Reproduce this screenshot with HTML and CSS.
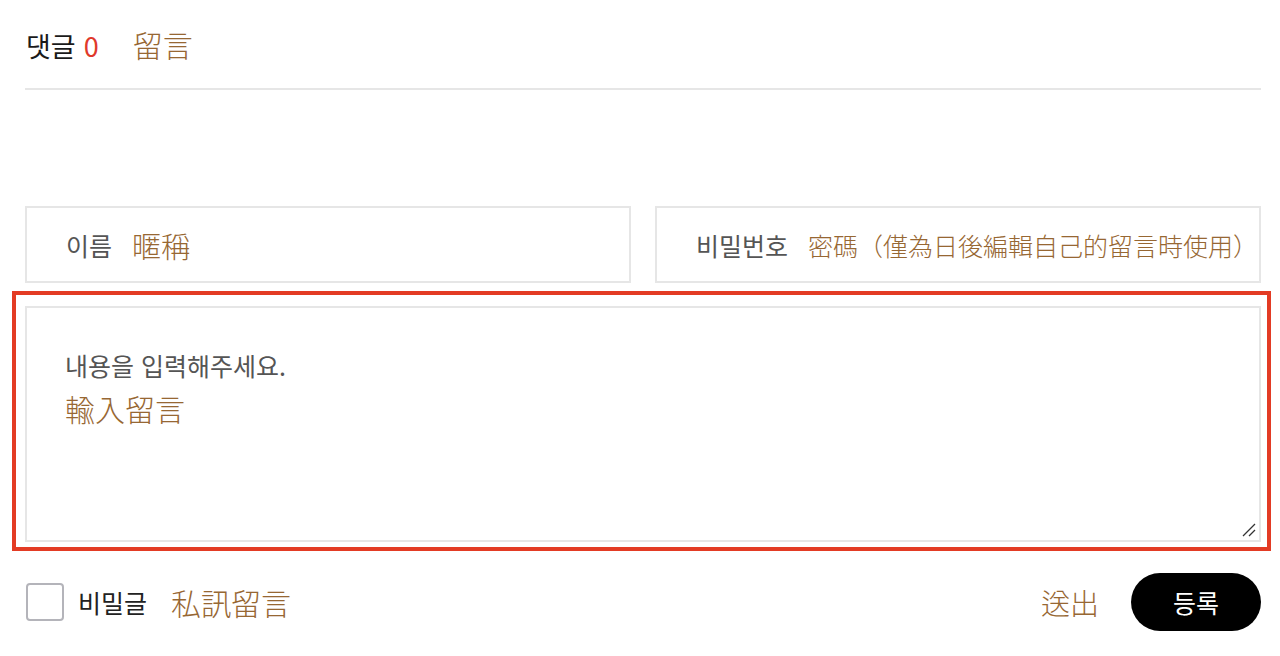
FILE: index.html
```html
<!DOCTYPE html>
<html lang="ko">
<head>
<meta charset="utf-8">
<title>댓글</title>
<link rel="stylesheet" href="styles.css">
</head>
<body>
<div class="page">
  <div class="head">
    <span class="head-title">댓글</span>
    <span class="head-count">0</span>
    <span class="note note-head">留言</span>
  </div>

  <div class="fields">
    <div class="field">
      <span class="label">이름</span>
      <span class="note">暱稱</span>
    </div>
    <div class="field">
      <span class="label">비밀번호</span>
      <span class="note note-sm">密碼（僅為日後編輯自己的留言時使用）</span>
    </div>
  </div>

  <div class="content-wrap">
    <div class="content">
      <div class="placeholder">내용을 입력해주세요.</div>
      <div class="note">輸入留言</div>
      <svg class="grip" width="14" height="14" viewBox="0 0 14 14">
        <line x1="1" y1="13" x2="13" y2="1" stroke="#333" stroke-width="1.3"/>
        <line x1="7" y1="13" x2="13" y2="7" stroke="#333" stroke-width="1.3"/>
      </svg>
    </div>
    <div class="highlight"></div>
  </div>

  <div class="foot">
    <label class="secret">
      <span class="check"></span>
      <span class="secret-label">비밀글</span>
      <span class="note">私訊留言</span>
    </label>
    <div class="submit">
      <span class="note">送出</span>
      <button class="btn">등록</button>
    </div>
  </div>
</div>
</body>
</html>
```

FILE: styles.css
```css
* { box-sizing: border-box; }
html, body { margin: 0; padding: 0; background: #fff; }
body {
  font-family: "Noto Sans CJK KR", "Noto Sans", sans-serif;
  color: #222;
}
.page {
  width: 1280px;
  padding: 0 19px 0 25px;
}
.note {
  font-family: "Noto Sans CJK TC", "Noto Sans CJK KR", sans-serif;
  color: #976733;
  font-size: 30px;
  font-weight: 300;
}
.note-sm { font-size: 25px; }

.head {
  height: 90px;
  border-bottom: 2px solid #e6e6e6;
  display: flex;
  align-items: baseline;
  padding-top: 22px;
  padding-left: 1px;
}
.head-title { font-size: 27px; color: #1a1a1a; }
.head-count { font-size: 27px; color: #e0392b; margin-left: 8px; }
.note-head { margin-left: 34px; }

.fields {
  margin-top: 116px;
  display: grid;
  grid-template-columns: 1fr 1fr;
  gap: 24px;
}
.field {
  height: 77px;
  border: 2px solid #e6e6e6;
  display: flex;
  align-items: center;
  padding-left: 39px;
}
.label { font-size: 25px; color: #555; margin-right: 20px; }
.field .note { font-size: 29px; }
.field .note-sm { font-size: 25px; }

.content-wrap {
  position: relative;
  margin-top: 23px;
}
.content {
  position: relative;
  height: 236px;
  border: 2px solid #e6e6e6;
  padding: 40px 38px;
}
.placeholder { font-size: 25px; color: #555; line-height: 34px; }
.content .note { line-height: 44px; margin-top: 4px; }
.grip { position: absolute; right: 3px; bottom: 3px; }
.highlight {
  position: absolute;
  left: -13px; top: -15px; right: -10px; bottom: -9px;
  border: 4px solid #e33b24;
  pointer-events: none;
}

.foot {
  margin-top: 31px;
  height: 58px;
  display: flex;
  align-items: center;
  justify-content: space-between;
}
.secret { display: flex; align-items: center; }
.check {
  width: 38px; height: 38px;
  border: 2px solid #b4b4ba;
  border-radius: 4px;
  margin-left: 1px;
}
.secret-label { font-size: 25px; color: #222; margin-left: 14px; margin-right: 24px; }
.submit { display: flex; align-items: center; }
.submit .note { font-size: 29px; }
.btn {
  margin-left: 32px;
  width: 130px; height: 58px;
  border: 0;
  border-radius: 29px;
  background: #000;
  color: #fff;
  font-family: "Noto Sans CJK KR", sans-serif;
  font-size: 25px;
}
```
